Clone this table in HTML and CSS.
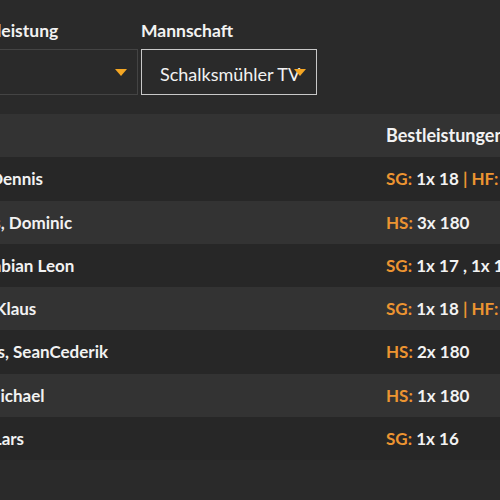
FILE: index.html
```html
<!DOCTYPE html>
<html lang="de">
<head>
    <meta charset="UTF-8">
    <meta name="viewport" content="width=device-width, initial-scale=1.0">
    <title>Bestleistungen</title>
    <link rel="stylesheet" href="styles.css">
</head>
<body>
    <!-- Filter -->
    <div class="filter">
        <div class="feld">
            <label>Bestleistung</label>
            <div class="auswahl auswahl-leer"></div>
        </div>
        <div class="feld">
            <label>Mannschaft</label>
            <div class="auswahl">Schalksmühler TV</div>
        </div>
    </div>

    <!-- Tabelle -->
    <table class="tabelle">
        <thead>
            <tr><th class="spalte-name">Name</th><th>Bestleistungen</th></tr>
        </thead>
        <tbody>
            <tr><td class="spalte-name">Meyer, Dennis</td><td><span class="art">SG:</span> 1x 18 <span class="art">|</span> <span class="art">HF:</span> 1x 120</td></tr>
            <tr><td class="spalte-name">Matthies, Dominic</td><td><span class="art">HS:</span> 3x 180</td></tr>
            <tr><td class="spalte-name">Wolff, Fabian Leon</td><td><span class="art">SG:</span> 1x 17 , 1x 18</td></tr>
            <tr><td class="spalte-name">Krause, Klaus</td><td><span class="art">SG:</span> 1x 18 <span class="art">|</span> <span class="art">HF:</span> 1x 104</td></tr>
            <tr><td class="spalte-name">Wilhelms, SeanCederik</td><td><span class="art">HS:</span> 2x 180</td></tr>
            <tr><td class="spalte-name">Frank, Michael</td><td><span class="art">HS:</span> 1x 180</td></tr>
            <tr><td class="spalte-name">Lorenz, Lars</td><td><span class="art">SG:</span> 1x 16</td></tr>
        </tbody>
    </table>
</body>
</html>
```
FILE: styles.css
```css
body {
    margin: 0;
    padding: 0;
    background-color: #2a2a2a;
    color: #f2f2f2;
    font-family: Lato, "Open Sans", sans-serif;
    overflow: hidden;
}

.filter {
    display: flex;
    gap: 3px;
    margin: 20px 0 0 -38px;
}

.feld label {
    display: block;
    font-size: 17.5px;
    font-weight: bold;
    line-height: 1.2;
    margin-bottom: 8px;
}

.auswahl {
    position: relative;
    width: 176px;
    height: 46px;
    box-sizing: border-box;
    border: 1px solid #c8c8c8;
    padding: 14px 20px 0 18px;
    font-size: 18px;
    line-height: 1.2;
    white-space: nowrap;
}

.auswahl-leer {
    border-color: #444444;
}

/* Pfeil des Auswahlfeldes */
.auswahl::before {
    content: "";
    position: absolute;
    right: 10px;
    top: 19px;
    border-left: 6px solid transparent;
    border-right: 6px solid transparent;
    border-top: 7px solid #f4a623;
}

.tabelle {
    border-collapse: collapse;
    margin: 19px 0 0 -78px;
    width: 760px;
    white-space: nowrap;
    text-align: left;
}

.tabelle th,
.tabelle td {
    padding: 12px;
    line-height: 19.3px;
    font-weight: bold;
}

.tabelle th {
    font-size: 18px;
    background-color: #333333;
}

.tabelle td {
    font-size: 17px;
}

.spalte-name {
    width: 428px;
}

.tabelle tbody tr:nth-child(odd) {
    background-color: #272727;
}

.tabelle tbody tr:nth-child(even) {
    background-color: #333333;
}

.art {
    color: #ec9431;
}
```
